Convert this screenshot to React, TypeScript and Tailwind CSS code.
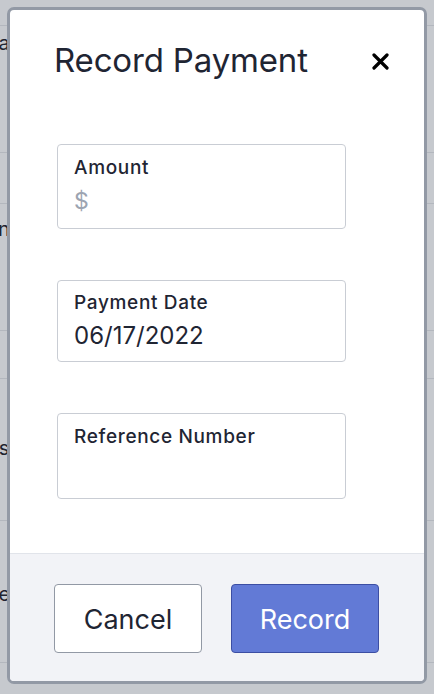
import React from "react";

const lines = [25, 152, 203, 330, 378, 520, 662];

export default function App() {
  return (
    <div
      className="relative w-[434px] h-[694px] overflow-hidden bg-[#c6c9ce]"
      style={{ fontFamily: "Inter, 'Noto Sans', sans-serif" }}
    >
      {lines.map((y) => (
        <div key={y} className="absolute left-0 right-0 h-px bg-[#b3b7be]" style={{ top: y }} />
      ))}
      <span className="absolute left-[-14px] top-[28px] text-[20px] text-[#1f2430]">ba</span>
      <span className="absolute left-[-14px] top-[214px] text-[20px] text-[#1f2430]">on</span>
      <span className="absolute left-[-6px] top-[433px] text-[20px] text-[#1f2430]">is</span>
      <span className="absolute left-[-12px] top-[579px] text-[20px] text-[#1f2430]">se</span>

      <div className="absolute left-[7px] top-[7px] w-[420px] h-[677px] rounded-[7px] border-[3px] border-[#9299a5] bg-white overflow-hidden flex flex-col">
        <div className="flex-1 flex flex-col">
          <div className="flex items-center justify-between pl-[44px] pr-[35px] pt-[30px]">
            <h2 className="text-[33px] leading-[40px] text-[#1f2533] font-normal tracking-[-0.005em]">Record Payment</h2>
            <svg width="17" height="17" viewBox="0 0 17 17" className="mt-[2px]">
              <path d="M2 2 L15 15 M15 2 L2 15" stroke="#000" strokeWidth="3.2" strokeLinecap="round" />
            </svg>
          </div>
          <div className="flex flex-col pl-[47px] pt-[64px] gap-[51px]">
            <div className="w-[289px] h-[85px] rounded-[4px] border border-[#c9cdd4] pl-[16px] pt-[11px]">
              <div className="text-[19px] leading-[24px] font-medium tracking-[0.035em] text-[#1f2533]">Amount</div>
              <div className="text-[23px] leading-[32px] text-[#9ca4b1] mt-[5px]">$</div>
            </div>
            <div className="w-[289px] h-[82px] rounded-[4px] border border-[#c9cdd4] pl-[16px] pt-[10px]">
              <div className="text-[19px] leading-[24px] font-medium tracking-[0.035em] text-[#1f2533]">Payment Date</div>
              <div className="text-[24px] leading-[32px] text-[#1f2533] mt-[5px]">06/17/2022</div>
            </div>
            <div className="w-[289px] h-[86px] rounded-[4px] border border-[#c9cdd4] pl-[16px] pt-[11px]">
              <div className="text-[19px] leading-[24px] font-medium tracking-[0.035em] text-[#1f2533]">Reference Number</div>
            </div>
          </div>
        </div>
        <div className="h-[128px] border-t border-[#e1e4ea] bg-[#f2f3f7] flex gap-[29px] pl-[44px] pt-[30px]">
          <button className="w-[148px] h-[69px] rounded-[4px] border border-[#9299a5] bg-white text-[27px] leading-[32px] text-[#1f2533] pt-[3px]">
            Cancel
          </button>
          <button className="w-[148px] h-[69px] rounded-[4px] border border-[#3c4ea3] bg-[#627ad6] text-[27px] leading-[32px] text-white pt-[3px]">
            Record
          </button>
        </div>
      </div>
    </div>
  );
}
